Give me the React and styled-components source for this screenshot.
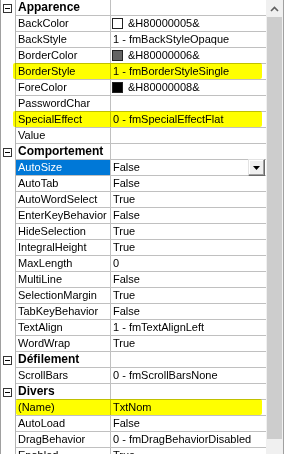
import React from "react";
import styled, { createGlobalStyle } from "styled-components";

const GlobalStyle = createGlobalStyle`
  *, *::before, *::after {
    box-sizing: border-box;
  }
  body {
    margin: 0;
    background: #fff;
    font-family: "Liberation Sans", Arial, sans-serif;
  }
`;

const groups = [
  {
    title: "Apparence",
    items: [
      { name: "BackColor", value: "&H80000005&", swatch: "#ffffff" },
      { name: "BackStyle", value: "1 - fmBackStyleOpaque" },
      { name: "BorderColor", value: "&H80000006&", swatch: "#646464" },
      { name: "BorderStyle", value: "1 - fmBorderStyleSingle", mark: 12 },
      { name: "ForeColor", value: "&H80000008&", swatch: "#000000" },
      { name: "PasswordChar", value: "" },
      { name: "SpecialEffect", value: "0 - fmSpecialEffectFlat", mark: 12 },
      { name: "Value", value: "" },
    ],
  },
  {
    title: "Comportement",
    items: [
      { name: "AutoSize", value: "False", selected: true },
      { name: "AutoTab", value: "False" },
      { name: "AutoWordSelect", value: "True" },
      { name: "EnterKeyBehavior", value: "False" },
      { name: "HideSelection", value: "True" },
      { name: "IntegralHeight", value: "True" },
      { name: "MaxLength", value: "0" },
      { name: "MultiLine", value: "False" },
      { name: "SelectionMargin", value: "True" },
      { name: "TabKeyBehavior", value: "False" },
      { name: "TextAlign", value: "1 - fmTextAlignLeft" },
      { name: "WordWrap", value: "True" },
    ],
  },
  {
    title: "Défilement",
    items: [{ name: "ScrollBars", value: "0 - fmScrollBarsNone" }],
  },
  {
    title: "Divers",
    items: [
      { name: "(Name)", value: "TxtNom", mark: 15 },
      { name: "AutoLoad", value: "False" },
      { name: "DragBehavior", value: "0 - fmDragBehaviorDisabled" },
      { name: "Enabled", value: "True" },
    ],
  },
];

const PropertyRow = ({ item }) => (
  <Row>
    <Gutter />
    <NameCell $selected={item.selected}>{item.name}</NameCell>
    <ValueCell>
      {item.swatch && <Swatch $color={item.swatch} />}
      <span>{item.value}</span>
      {item.selected && (
        <DropButton>
          <svg width="7" height="4" viewBox="0 0 7 4">
            <polygon points="0,0 7,0 3.5,4" fill="#000" />
          </svg>
        </DropButton>
      )}
    </ValueCell>
    {item.mark !== undefined && <Marker $left={item.mark} />}
  </Row>
);

const App = () => {
  return (
    <>
      <GlobalStyle />
      <Frame>
        <Grid>
          {groups.map((group) => (
            <React.Fragment key={group.title}>
              <Row>
                <Gutter>
                  <Collapse>
                    <svg width="9" height="9" viewBox="0 0 9 9">
                      <rect x="0.5" y="0.5" width="8" height="8" fill="#fff" stroke="#333" />
                      <line x1="2" y1="4.5" x2="7" y2="4.5" stroke="#000" />
                    </svg>
                  </Collapse>
                </Gutter>
                <NameCell $category>{group.title}</NameCell>
                <ValueCell />
              </Row>
              {group.items.map((item) => (
                <PropertyRow key={item.name} item={item} />
              ))}
            </React.Fragment>
          ))}
        </Grid>
        <ScrollBar>
          <ArrowButton>
            <svg width="9" height="6" viewBox="0 0 9 6">
              <polyline points="1,5 4.5,1.5 8,5" fill="none" stroke="#606060" strokeWidth="1.6" />
            </svg>
          </ArrowButton>
          <Thumb />
        </ScrollBar>
        <Edge />
      </Frame>
    </>
  );
};

export default App;

const Frame = styled.div`
  width: 285px;
  height: 454px;
  overflow: hidden;
  display: flex;
  border-left: 1px solid #a0a0a0;
  background: #fff;
`;

const Grid = styled.div`
  flex: 1;
  min-width: 0;
  display: flex;
  flex-direction: column;
`;

const Row = styled.div`
  position: relative;
  display: flex;
  height: 16px;
  flex-shrink: 0;
  font-size: 11px;
  line-height: 15px;
  color: #000;
`;

const Gutter = styled.div`
  width: 15px;
  border-right: 1px solid #b4b4b4;
  display: flex;
  align-items: flex-start;
  justify-content: center;
`;

const Collapse = styled.span`
  display: flex;
  margin-top: 4px;
  margin-right: 2px;
`;

const NameCell = styled.div`
  width: 95px;
  padding-left: 2px;
  border-right: 1px solid #c0c0c0;
  border-bottom: 1px solid #c0c0c0;
  white-space: nowrap;
  overflow: hidden;
  font-weight: ${(p) => (p.$category ? "bold" : "normal")};
  font-size: ${(p) => (p.$category ? "12px" : "11px")};
  background: ${(p) => (p.$selected ? "#0078d7" : "transparent")};
  color: ${(p) => (p.$selected ? "#fff" : "#000")};
`;

const ValueCell = styled.div`
  flex: 1;
  display: flex;
  align-items: flex-start;
  padding-left: 2px;
  border-bottom: 1px solid #c0c0c0;
  white-space: nowrap;
`;

const Swatch = styled.span`
  width: 11px;
  height: 11px;
  margin: 2px 5px 0 -1px;
  border: 1px solid #222;
  background: ${(p) => p.$color};
`;

const DropButton = styled.span`
  margin-left: auto;
  margin-top: -1px;
  margin-right: 1px;
  width: 17px;
  height: 17px;
  display: flex;
  align-items: center;
  justify-content: center;
  background: #f0f0f0;
  border: 1px solid;
  border-color: #e3e3e3 #696969 #696969 #e3e3e3;
  box-shadow: inset -1px -1px #a0a0a0, inset 1px 1px #fff;
`;

const Marker = styled.div`
  position: absolute;
  top: -1px;
  left: ${(p) => p.$left}px;
  right: 4px;
  height: 16px;
  background: #ffff00;
  border-radius: 2px;
  mix-blend-mode: multiply;
  pointer-events: none;
`;

const ScrollBar = styled.div`
  width: 17px;
  display: flex;
  flex-direction: column;
  background: #f0f0f0;
`;

const ArrowButton = styled.div`
  height: 17px;
  display: flex;
  align-items: center;
  justify-content: center;
`;

const Thumb = styled.div`
  height: 422px;
  margin: 0 1px;
  background: #cdcdcd;
`;

const Edge = styled.div`
  width: 2px;
  border-left: 1px solid #a0a0a0;
  background: #fff;
`;
